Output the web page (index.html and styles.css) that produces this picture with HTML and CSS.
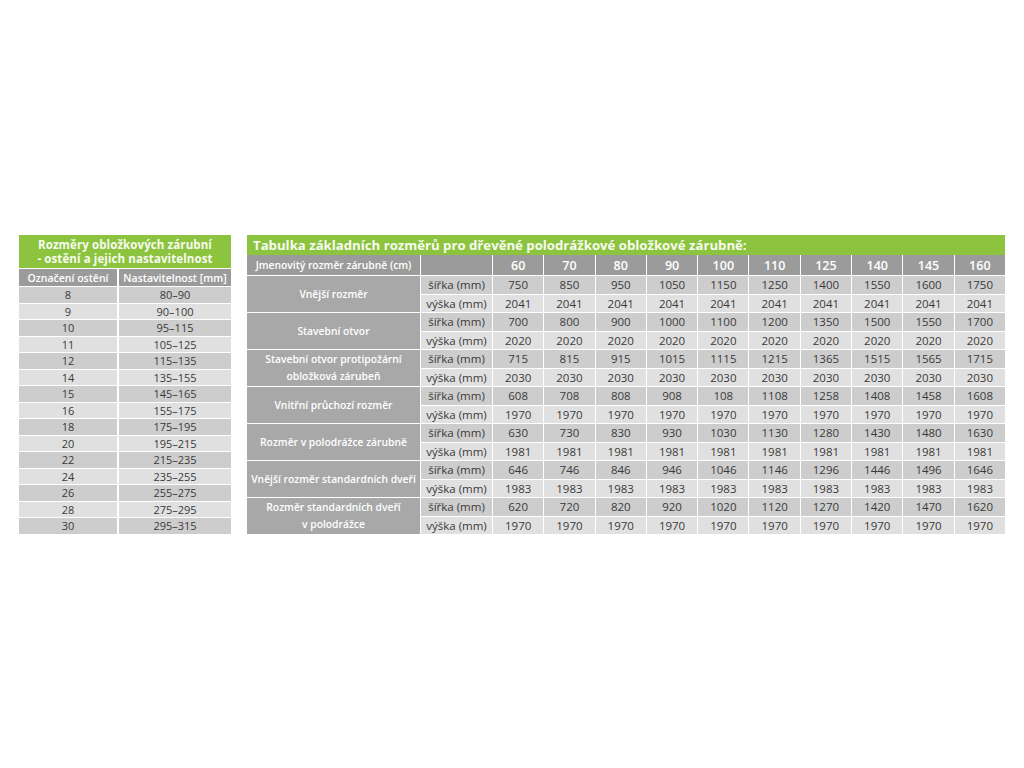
FILE: index.html
```html
<!DOCTYPE html>
<html lang="cs">
<head>
<meta charset="utf-8">
<title>Tabulka rozměrů zárubní</title>
<link rel="stylesheet" href="styles.css">
</head>
<body>
<div class="page">
  <section class="left">
    <div class="ltitle">Rozměry obložkových zárubní<br>- ostění a jejich nastavitelnost</div>
    <div class="lgrid">
      <div class="lh">Označení ostění</div><div class="lh">Nastavitelnost [mm]</div>
      <div class="d">8</div><div class="d">80–90</div>
      <div class="l">9</div><div class="l">90–100</div>
      <div class="d">10</div><div class="d">95–115</div>
      <div class="l">11</div><div class="l">105–125</div>
      <div class="d">12</div><div class="d">115–135</div>
      <div class="l">14</div><div class="l">135–155</div>
      <div class="d">15</div><div class="d">145–165</div>
      <div class="l">16</div><div class="l">155–175</div>
      <div class="d">18</div><div class="d">175–195</div>
      <div class="l">20</div><div class="l">195–215</div>
      <div class="d">22</div><div class="d">215–235</div>
      <div class="l">24</div><div class="l">235–255</div>
      <div class="d">26</div><div class="d">255–275</div>
      <div class="l">28</div><div class="l">275–295</div>
      <div class="d">30</div><div class="d">295–315</div>
    </div>
  </section>

  <section class="right">
    <div class="rtitle">Tabulka základních rozměrů pro dřevěné polodrážkové obložkové zárubně:</div>
    <div class="rgrid">
      <div class="rh first">Jmenovitý rozměr zárubně (cm)</div><div class="rh"></div>
      <div class="rh num">60</div><div class="rh num">70</div><div class="rh num">80</div><div class="rh num">90</div><div class="rh num">100</div><div class="rh num">110</div><div class="rh num">125</div><div class="rh num">140</div><div class="rh num">145</div><div class="rh num">160</div>

      <div class="lab">Vnější rozměr</div>
      <div class="d">šířka (mm)</div><div class="d">750</div><div class="d">850</div><div class="d">950</div><div class="d">1050</div><div class="d">1150</div><div class="d">1250</div><div class="d">1400</div><div class="d">1550</div><div class="d">1600</div><div class="d">1750</div>
      <div class="l">výška (mm)</div><div class="l">2041</div><div class="l">2041</div><div class="l">2041</div><div class="l">2041</div><div class="l">2041</div><div class="l">2041</div><div class="l">2041</div><div class="l">2041</div><div class="l">2041</div><div class="l">2041</div>

      <div class="lab">Stavební otvor</div>
      <div class="d">šířka (mm)</div><div class="d">700</div><div class="d">800</div><div class="d">900</div><div class="d">1000</div><div class="d">1100</div><div class="d">1200</div><div class="d">1350</div><div class="d">1500</div><div class="d">1550</div><div class="d">1700</div>
      <div class="l">výška (mm)</div><div class="l">2020</div><div class="l">2020</div><div class="l">2020</div><div class="l">2020</div><div class="l">2020</div><div class="l">2020</div><div class="l">2020</div><div class="l">2020</div><div class="l">2020</div><div class="l">2020</div>

      <div class="lab">Stavební otvor protipožární<br>obložková zárubeň</div>
      <div class="d">šířka (mm)</div><div class="d">715</div><div class="d">815</div><div class="d">915</div><div class="d">1015</div><div class="d">1115</div><div class="d">1215</div><div class="d">1365</div><div class="d">1515</div><div class="d">1565</div><div class="d">1715</div>
      <div class="l">výška (mm)</div><div class="l">2030</div><div class="l">2030</div><div class="l">2030</div><div class="l">2030</div><div class="l">2030</div><div class="l">2030</div><div class="l">2030</div><div class="l">2030</div><div class="l">2030</div><div class="l">2030</div>

      <div class="lab">Vnitřní průchozí rozměr</div>
      <div class="d">šířka (mm)</div><div class="d">608</div><div class="d">708</div><div class="d">808</div><div class="d">908</div><div class="d">108</div><div class="d">1108</div><div class="d">1258</div><div class="d">1408</div><div class="d">1458</div><div class="d">1608</div>
      <div class="l">výška (mm)</div><div class="l">1970</div><div class="l">1970</div><div class="l">1970</div><div class="l">1970</div><div class="l">1970</div><div class="l">1970</div><div class="l">1970</div><div class="l">1970</div><div class="l">1970</div><div class="l">1970</div>

      <div class="lab">Rozměr v polodrážce zárubně</div>
      <div class="d">šířka (mm)</div><div class="d">630</div><div class="d">730</div><div class="d">830</div><div class="d">930</div><div class="d">1030</div><div class="d">1130</div><div class="d">1280</div><div class="d">1430</div><div class="d">1480</div><div class="d">1630</div>
      <div class="l">výška (mm)</div><div class="l">1981</div><div class="l">1981</div><div class="l">1981</div><div class="l">1981</div><div class="l">1981</div><div class="l">1981</div><div class="l">1981</div><div class="l">1981</div><div class="l">1981</div><div class="l">1981</div>

      <div class="lab">Vnější rozměr standardních dveří</div>
      <div class="d">šířka (mm)</div><div class="d">646</div><div class="d">746</div><div class="d">846</div><div class="d">946</div><div class="d">1046</div><div class="d">1146</div><div class="d">1296</div><div class="d">1446</div><div class="d">1496</div><div class="d">1646</div>
      <div class="l">výška (mm)</div><div class="l">1983</div><div class="l">1983</div><div class="l">1983</div><div class="l">1983</div><div class="l">1983</div><div class="l">1983</div><div class="l">1983</div><div class="l">1983</div><div class="l">1983</div><div class="l">1983</div>

      <div class="lab">Rozměr standardních dveří<br>v polodrážce</div>
      <div class="d">šířka (mm)</div><div class="d">620</div><div class="d">720</div><div class="d">820</div><div class="d">920</div><div class="d">1020</div><div class="d">1120</div><div class="d">1270</div><div class="d">1420</div><div class="d">1470</div><div class="d">1620</div>
      <div class="l">výška (mm)</div><div class="l">1970</div><div class="l">1970</div><div class="l">1970</div><div class="l">1970</div><div class="l">1970</div><div class="l">1970</div><div class="l">1970</div><div class="l">1970</div><div class="l">1970</div><div class="l">1970</div>
    </div>
  </section>
</div>
</body>
</html>
```

FILE: styles.css
```css
* { box-sizing: border-box; }

html, body {
  margin: 0;
  padding: 0;
  background: #ffffff;
}

body {
  font-family: "Open Sans", "DejaVu Sans", sans-serif;
  color: #3a3a3a;
}

.page {
  display: flex;
  align-items: flex-start;
  gap: 16px;
  padding: 235px 0 0 19px;
}

/* ---------- left table ---------- */
.left {
  width: 212px;
  flex: none;
}

.ltitle {
  background: #8cc43f;
  color: #f7fbef;
  font-weight: 700;
  font-size: 11.5px;
  line-height: 13.5px;
  text-align: center;
  height: 33px;
  padding-top: 3px;
  letter-spacing: 0.1px;
}

.lgrid {
  display: grid;
  grid-template-columns: 98px 1fr;
  grid-template-rows: 17px repeat(15, 15.5px);
  column-gap: 2px;
  row-gap: 1px;
  margin-top: 1px;
}

.lgrid > div {
  display: flex;
  align-items: center;
  justify-content: center;
  font-size: 11px;
  white-space: nowrap;
}

.lgrid > .lh {
  background: #9b9b9b;
  color: #ffffff;
  font-weight: 600;
  font-size: 10.5px;
}

.d { background: #cdcdcd; }
.l { background: #e0e0e0; }

/* ---------- right table ---------- */
.right {
  width: 758px;
  flex: none;
}

.rtitle {
  background: #8cc43f;
  color: #f7fbef;
  font-weight: 700;
  font-size: 13.2px;
  line-height: 20px;
  height: 20px;
  padding-left: 6px;
  white-space: nowrap;
}

.rgrid {
  display: grid;
  grid-template-columns: 173px 71px repeat(10, 1fr);
  grid-template-rows: 20px repeat(14, 17.5px);
  gap: 1px;
}

.rgrid > div {
  display: flex;
  align-items: center;
  justify-content: center;
  font-size: 11.5px;
  white-space: nowrap;
}

.rgrid > .rh {
  background: #9b9b9b;
  color: #ffffff;
}

.rgrid > .rh.first {
  font-size: 10.3px;
  font-weight: 600;
}

.rgrid > .rh.num {
  font-size: 12.5px;
  font-weight: 600;
}

.rgrid > .lab {
  grid-row: span 2;
  background: #a8a8a8;
  color: #ffffff;
  font-weight: 600;
  font-size: 10.3px;
  line-height: 17px;
  text-align: center;
}
```
